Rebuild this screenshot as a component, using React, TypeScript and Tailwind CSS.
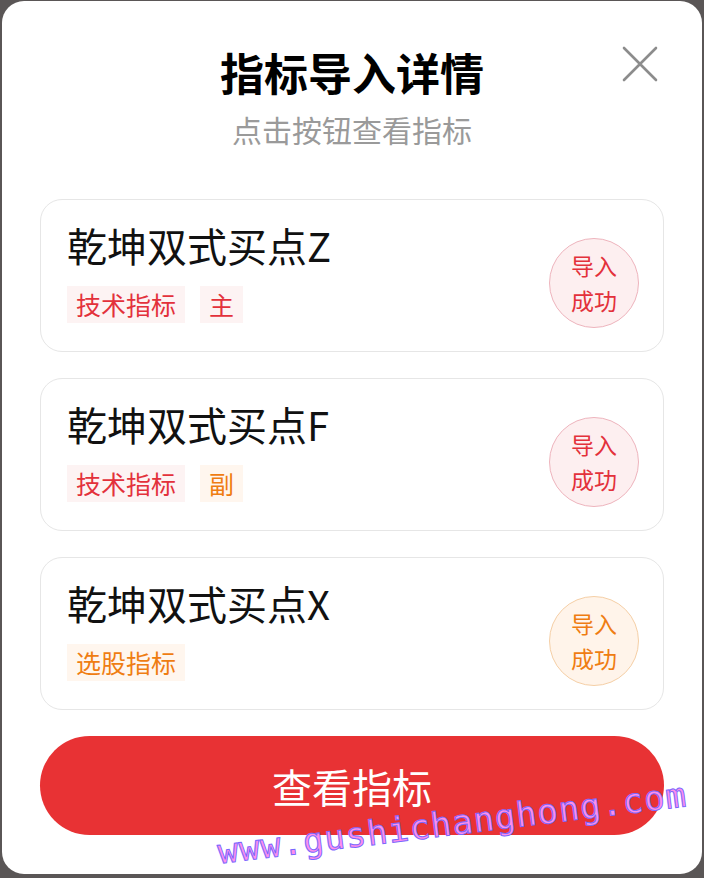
type Tag = { label: string; tone: 'red' | 'orange' };

type Item = {
    name: string;
    tags: Tag[];
    tone: 'red' | 'orange';
};

const items: Item[] = [
    { name: '乾坤双式买点Z', tags: [{ label: '技术指标', tone: 'red' }, { label: '主', tone: 'red' }], tone: 'red' },
    { name: '乾坤双式买点F', tags: [{ label: '技术指标', tone: 'red' }, { label: '副', tone: 'orange' }], tone: 'red' },
    { name: '乾坤双式买点X', tags: [{ label: '选股指标', tone: 'orange' }], tone: 'orange' },
];

function TagChip({ tag }: { tag: Tag }) {
    const cls =
        tag.tone === 'red'
            ? 'bg-[#fdf3f3] text-[#e3313b]'
            : 'bg-[#fff6ee] text-[#ef7d12]';
    return <span className={`h-[37px] px-[9px] flex items-center text-[25px] leading-none ${cls}`}>{tag.label}</span>;
}

function Badge({ tone }: { tone: 'red' | 'orange' }) {
    const cls =
        tone === 'red'
            ? 'border-[#eeb4bd] bg-[#fdeff0] text-[#e3313b]'
            : 'border-[#f5cfa6] bg-[#fff4ea] text-[#ef7d12]';
    return (
        <div className={`w-[90px] h-[90px] rounded-full border flex flex-col items-center justify-center text-[23px] leading-[35px] ${cls}`}>
            <span>导入</span>
            <span>成功</span>
        </div>
    );
}

export default function App() {
    return (
        <div
            className="relative w-[704px] h-[878px] bg-[#5a5656] pt-[1px] px-[2px] overflow-hidden"
            style={{ fontFamily: '"Noto Sans CJK SC", "Noto Sans", sans-serif' }}
        >
            <div className="relative h-[873px] bg-white rounded-[22px] px-[38px] pt-[43px]">
                {/* Header */}
                <div className="flex flex-col items-center">
                    <h1 className="text-[44px] leading-[56px] font-bold text-black">指标导入详情</h1>
                    <p className="mt-[11px] text-[30px] leading-[36px] text-[#9a9a9a]">点击按钮查看指标</p>
                </div>
                <button className="absolute left-[620px] top-[45px]">
                    <svg width="36" height="36" viewBox="0 0 36 36" fill="none" stroke="#8c8c8c" strokeWidth="2.6" strokeLinecap="round">
                        <path d="M2 2 L34 34 M34 2 L2 34" />
                    </svg>
                </button>

                {/* Cards */}
                <div className="mt-[52px] flex flex-col gap-[26px]">
                    {items.map((item) => (
                        <div
                            key={item.name}
                            className="h-[153px] rounded-[22px] border border-[#e6e6e6] pl-[26px] pr-[24px] flex items-start justify-between"
                        >
                            <div className="pt-[21px] flex flex-col">
                                <div className="text-[40px] leading-[48px] text-[#111]">{item.name}</div>
                                <div className="mt-[17px] flex gap-[15px]">
                                    {item.tags.map((t) => (
                                        <TagChip key={t.label} tag={t} />
                                    ))}
                                </div>
                            </div>
                            <div className="mt-[38px]">
                                <Badge tone={item.tone} />
                            </div>
                        </div>
                    ))}
                </div>

                {/* Button */}
                <button className="mt-[26px] w-full h-[99px] rounded-full bg-[#e83234] text-white text-[40px] leading-none">
                    查看指标
                </button>

                {/* Watermark */}
                <div
                    className="absolute left-[214px] top-[805px] -rotate-[7deg] text-[34px] leading-none tracking-[1px] text-[#ff8fe9] [-webkit-text-stroke:1px_#7b68ff] whitespace-nowrap"
                    style={{ fontFamily: '"DejaVu Sans Mono", monospace' }}
                >
                    www.gushichanghong.com
                </div>
            </div>
        </div>
    );
}
